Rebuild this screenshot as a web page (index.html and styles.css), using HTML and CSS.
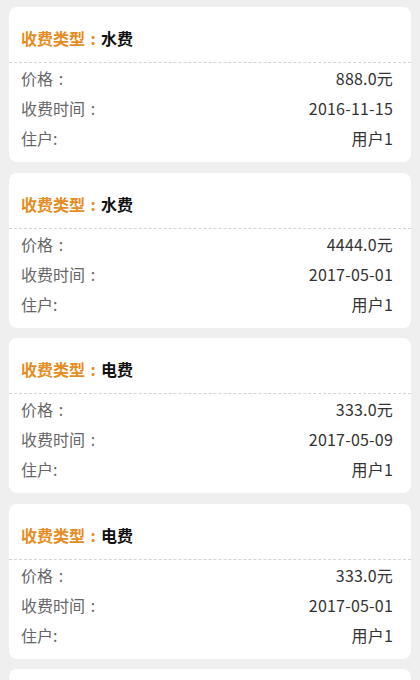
FILE: index.html
```html
<!DOCTYPE html>
<html lang="zh-CN">
  <head>
    <meta charset="utf-8" />
    <title>收费记录</title>
    <meta name="viewport" content="width=device-width, initial-scale=1" />
    <link rel="stylesheet" href="styles.css">
  </head>
  <body>
    <div class="list">
      <div class="card">
        <div class="card-title"><span class="key">收费类型<span class="colon">:</span></span>水费</div>
        <div class="row"><span class="label">价格<span class="colon">:</span></span><span class="value">888.0元</span></div>
        <div class="row"><span class="label">收费时间<span class="colon">:</span></span><span class="value">2016-11-15</span></div>
        <div class="row"><span class="label">住户:</span><span class="value">用户1</span></div>
      </div>

      <div class="card">
        <div class="card-title"><span class="key">收费类型<span class="colon">:</span></span>水费</div>
        <div class="row"><span class="label">价格<span class="colon">:</span></span><span class="value">4444.0元</span></div>
        <div class="row"><span class="label">收费时间<span class="colon">:</span></span><span class="value">2017-05-01</span></div>
        <div class="row"><span class="label">住户:</span><span class="value">用户1</span></div>
      </div>

      <div class="card">
        <div class="card-title"><span class="key">收费类型<span class="colon">:</span></span>电费</div>
        <div class="row"><span class="label">价格<span class="colon">:</span></span><span class="value">333.0元</span></div>
        <div class="row"><span class="label">收费时间<span class="colon">:</span></span><span class="value">2017-05-09</span></div>
        <div class="row"><span class="label">住户:</span><span class="value">用户1</span></div>
      </div>

      <div class="card">
        <div class="card-title"><span class="key">收费类型<span class="colon">:</span></span>电费</div>
        <div class="row"><span class="label">价格<span class="colon">:</span></span><span class="value">333.0元</span></div>
        <div class="row"><span class="label">收费时间<span class="colon">:</span></span><span class="value">2017-05-01</span></div>
        <div class="row"><span class="label">住户:</span><span class="value">用户1</span></div>
      </div>

      <div class="card">
        <div class="card-title"><span class="key">收费类型<span class="colon">:</span></span>水费</div>
        <div class="row"><span class="label">价格<span class="colon">:</span></span><span class="value">100.0元</span></div>
        <div class="row"><span class="label">收费时间<span class="colon">:</span></span><span class="value">2017-05-01</span></div>
        <div class="row"><span class="label">住户:</span><span class="value">用户1</span></div>
      </div>
    </div>
  </body>
</html>
```

FILE: styles.css
```css
body {
  margin: 0;
  background: #efefef;
  font-family: "Noto Sans CJK SC", "Noto Sans", sans-serif;
  color: #333;
}
.list {
  padding: 7px 9px;
  display: flex;
  flex-direction: column;
  gap: 10.5px;
}
.card {
  background: #fff;
  border-radius: 8px;
  height: 155px;
  box-sizing: border-box;
  padding-bottom: 9px;
}
.card-title {
  padding: 20px 12px 13px;
  line-height: 22px;
  font-size: 16px;
  font-weight: bold;
  color: #111;
  border-bottom: 1px dashed #d4d4d4;
}
.card-title .key {
  color: #e58c22;
}
/* colon takes a full em and sits in the middle of it */
.colon {
  display: inline-block;
  width: 1em;
  text-align: center;
}
.row {
  display: flex;
  justify-content: space-between;
  align-items: center;
  height: 30px;
  padding: 0 18px 0 12px;
  font-size: 16px;
}
.label {
  color: #666;
}
.value {
  color: #333;
  letter-spacing: 0.2px;
}
```
